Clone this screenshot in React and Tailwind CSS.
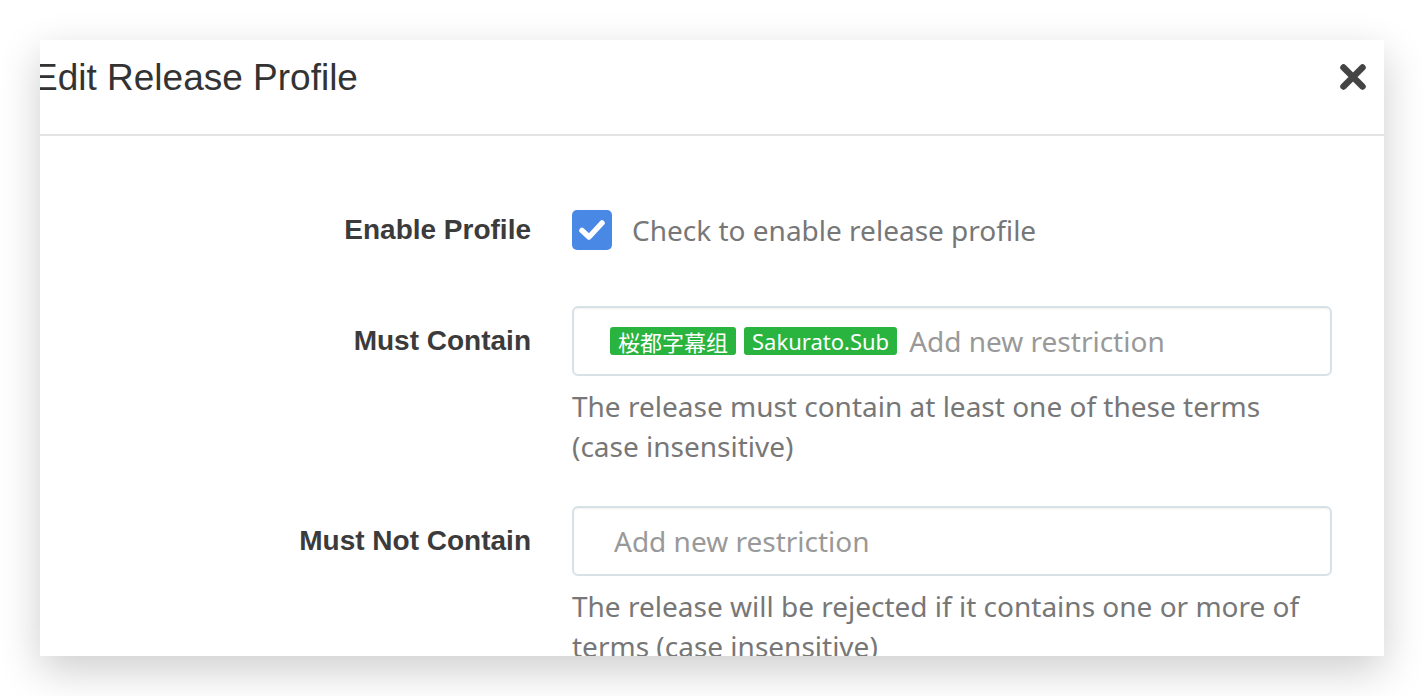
import React from "react";

const sans = { fontFamily: '"Noto Sans", "Noto Sans CJK SC", sans-serif' };

function Tag({ children, cjk }) {
  return (
    <span
      className="inline-flex items-center h-[28px] px-[8px] rounded-[3px] bg-[#29b440] text-white text-[22px] leading-[28px] whitespace-nowrap"
      style={{ fontFamily: cjk ? '"Noto Sans CJK SC", sans-serif' : '"Noto Sans", sans-serif' }}
    >
      {children}
    </span>
  );
}

function Label({ children }) {
  return (
    <div className="w-[491px] shrink-0 text-right font-['Liberation_Sans',Arial,sans-serif] font-bold text-[28px] text-[#3b3b3b]">
      {children}
    </div>
  );
}

export default function App() {
  return (
    <div className="w-[1424px] h-[696px] bg-white p-[40px] overflow-hidden">
      <div className="w-[1344px] h-[616px] bg-white overflow-hidden shadow-[0_14px_40px_rgba(0,0,0,0.2)]">
        {/* header */}
        <div className="h-[96px] flex items-center justify-between border-b-2 border-[#e3e3e3] pb-[20px]">
          <div className="-ml-[7px] font-['Liberation_Sans',Arial,sans-serif] text-[37px] leading-none text-[#333]">
            Edit Release Profile
          </div>
          <svg width="28" height="28" viewBox="0 0 28 28" className="mr-[17px]">
            <path d="M4.5 4.5 L23.5 23.5 M23.5 4.5 L4.5 23.5" stroke="#444" strokeWidth="6.5" strokeLinecap="round" />
          </svg>
        </div>

        {/* body */}
        <div className="pt-[74px]" style={sans}>
          {/* enable */}
          <div className="flex items-center gap-[41px] h-[40px]">
            <Label>Enable Profile</Label>
            <div className="flex items-center gap-[20px]">
              <div className="w-[40px] h-[40px] rounded-[5px] bg-[#4a88e6] flex items-center justify-center">
                <svg width="30" height="26" viewBox="0 0 30 26">
                  <path d="M5 13.5 L12 20 L25 6" fill="none" stroke="white" strokeWidth="5.5" strokeLinecap="round" strokeLinejoin="round" />
                </svg>
              </div>
              <span className="text-[28px] leading-[40px] text-[#777]">Check to enable release profile</span>
            </div>
          </div>

          {/* must contain */}
          <div className="flex items-start gap-[41px] mt-[56px]">
            <div className="h-[70px] flex items-center">
              <Label>Must Contain</Label>
            </div>
            <div className="w-[760px]">
              <div className="h-[70px] rounded-[6px] border-2 border-[#d8e1e6] shadow-[inset_0_1px_2px_rgba(0,0,0,0.06)] flex items-center pl-[36px]">
                <div className="flex items-center gap-[8px]">
                  <Tag cjk>桜都字幕组</Tag>
                  <Tag>Sakurato.Sub</Tag>
                </div>
                <span className="ml-[12px] text-[28px] text-[#999]">Add new restriction</span>
              </div>
              <div className="mt-[10px] text-[28px] leading-[40px] text-[#777]">
                The release must contain at least one of these terms (case insensitive)
              </div>
            </div>
          </div>

          {/* must not contain */}
          <div className="flex items-start gap-[41px] mt-[40px]">
            <div className="h-[70px] flex items-center">
              <Label>Must Not Contain</Label>
            </div>
            <div className="w-[760px]">
              <div className="h-[70px] rounded-[6px] border-2 border-[#d8e1e6] shadow-[inset_0_1px_2px_rgba(0,0,0,0.06)] flex items-center pl-[40px]">
                <span className="text-[28px] text-[#999]">Add new restriction</span>
              </div>
              <div className="mt-[10px] text-[28px] leading-[40px] text-[#777]">
                The release will be rejected if it contains one or more of terms (case insensitive)
              </div>
            </div>
          </div>
        </div>
      </div>
    </div>
  );
}
